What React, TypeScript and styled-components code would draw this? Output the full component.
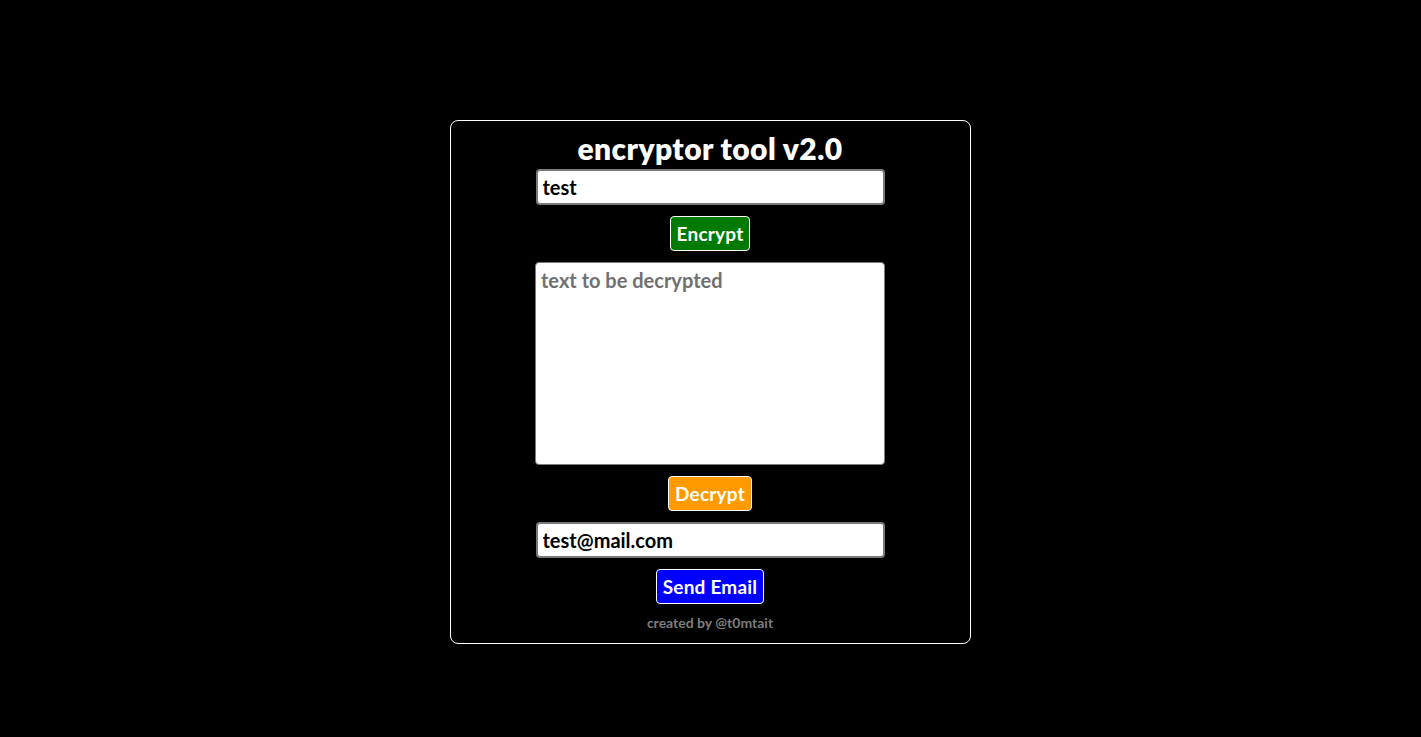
import React, { useState } from 'react';
import styled, { createGlobalStyle } from 'styled-components';

const GlobalStyle = createGlobalStyle`
	html, body {
		margin: 0;
		padding: 0;
		background: #000;
	}
	body {
		font-family: 'Lato', 'Open Sans', sans-serif;
	}
`;

const Page = styled.div`
	display: flex;
	justify-content: center;
	align-items: flex-start;
	padding: 120px 1px 0 0;
	min-height: 737px;
	box-sizing: border-box;
`;

const Card = styled.div`
	width: 521px;
	box-sizing: border-box;
	border: 1px solid #fff;
	border-radius: 8px;
	padding: 11px 0 12px;
	display: flex;
	flex-direction: column;
	align-items: center;
	color: #fff;
`;

const Title = styled.h1`
	margin: 0 0 5px;
	font-size: 30px;
	line-height: 32px;
	height: 32px;
	font-weight: 800;
	letter-spacing: 0.4px;
`;

const Field = styled.input`
	width: 349px;
	height: 36px;
	box-sizing: border-box;
	border: 2px solid #7a7a7a;
	border-radius: 4px;
	padding: 0 5px;
	font-family: inherit;
	font-size: 20px;
	font-weight: 700;
	color: #000;
	background: #fff;
	outline: none;
`;

const TextBox = styled.textarea`
	display: block;
	width: 350px;
	height: 203px;
	box-sizing: border-box;
	border: 1px solid #7a7a7a;
	border-radius: 4px;
	padding: 5px 5px;
	font-family: inherit;
	font-size: 20px;
	font-weight: 700;
	color: #000;
	background: #fff;
	resize: none;
	outline: none;
	&::placeholder {
		color: #707070;
	}
`;

const ActionButton = styled.button<{ bg: string }>`
	margin: 11px 0;
	height: 35px;
	padding: 0 6px;
	border: 1px solid #fff;
	border-radius: 4px;
	background: ${(p) => p.bg};
	color: #fff;
	font-family: inherit;
	font-size: 19px;
	font-weight: 700;
	letter-spacing: 0.2px;
	cursor: pointer;
`;

const Footer = styled.div`
	font-size: 14px;
	line-height: 16px;
	font-weight: 700;
	color: #7d7d7d;
`;

const App: React.FC = () => {
	const [plain, setPlain] = useState('test');
	const [cipher, setCipher] = useState('');
	const [email, setEmail] = useState('test@mail.com');

	return (
		<Page>
			<GlobalStyle />
			<Card>
				<Title>encryptor tool v2.0</Title>
				<Field value={plain} onChange={(e) => setPlain(e.target.value)} />
				<ActionButton bg="#007a00">Encrypt</ActionButton>
				<TextBox
					placeholder="text to be decrypted"
					value={cipher}
					onChange={(e) => setCipher(e.target.value)}
				/>
				<ActionButton bg="#ff9a00">Decrypt</ActionButton>
				<Field value={email} onChange={(e) => setEmail(e.target.value)} />
				<ActionButton bg="#0000ff">Send Email</ActionButton>
				<Footer>created by @t0mtait</Footer>
			</Card>
		</Page>
	);
};

export default App;
